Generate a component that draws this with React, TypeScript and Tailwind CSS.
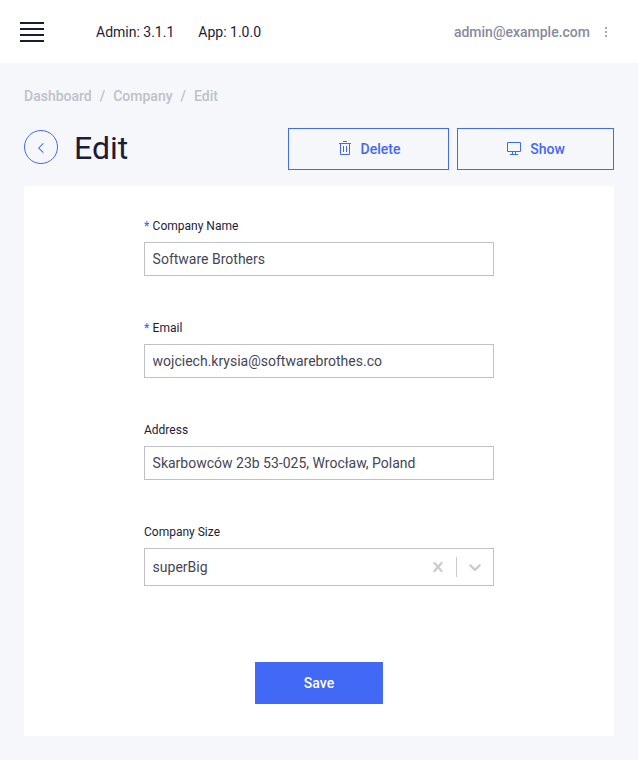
import type { ReactNode } from 'react'

function Field({ label, required, children }: { label: string; required?: boolean; children: ReactNode }) {
  return (
    <div className="mb-11">
      <div className="mb-2 flex h-4 items-center text-xs leading-4">
        {required && <span className="w-[8.600px] font-medium text-[#4268f6]">*</span>}
        <label>{label}</label>
      </div>
      {children}
    </div>
  )
}

function TextInput({ value }: { value: string }) {
  return (
    <input
      readOnly
      value={value}
      className="block h-[34px] w-full border border-[#c0c0ca] bg-white pl-[7.600px] pr-2 text-sm leading-4 text-[#454655] outline-none"
    />
  )
}

function TrashIcon() {
  return (
    <svg width="16" height="16" viewBox="0 0 32 32" fill="currentColor">
      <path d="M12 12h2v12h-2zM18 12h2v12h-2z" />
      <path d="M4 6v2h2v20a2 2 0 0 0 2 2h16a2 2 0 0 0 2-2V8h2V6zm4 22V8h16v20zM12 2h8v2h-8z" />
    </svg>
  )
}

function ScreenIcon() {
  return (
    <svg width="16" height="16" viewBox="0 0 32 32" fill="currentColor">
      <path d="M28 4H4a2 2 0 0 0-2 2v16a2 2 0 0 0 2 2h8v4H8v2h16v-2h-4v-4h8a2 2 0 0 0 2-2V6a2 2 0 0 0-2-2zM18 28h-4v-4h4zm10-6H4V6h24z" />
    </svg>
  )
}

export default function App() {
  return (
    <div className="h-[760px] w-full bg-[#f6f7fb] font-['Roboto',sans-serif] text-sm leading-4 text-[#1c1c38]">
      <header className="flex h-[63px] items-center bg-white pl-5 pr-[28px]">
        <button className="flex w-6 flex-col gap-1" aria-label="Menu">
          <span className="h-0.5 bg-[#1c1c38]" />
          <span className="h-0.5 bg-[#1c1c38]" />
          <span className="h-0.5 bg-[#1c1c38]" />
          <span className="h-0.5 bg-[#1c1c38]" />
        </button>
        <span className="ml-[52px] mt-px">Admin: 3.1.1</span>
        <span className="ml-6 mt-px">App: 1.0.0</span>
        <div className="ml-auto mt-px flex items-center font-medium text-[#898a9a]">
          admin@example.com
          <svg width="8" height="16" viewBox="0 0 8 16" fill="currentColor" className="ml-3">
            <circle cx="4" cy="4" r="1" />
            <circle cx="4" cy="8" r="1" />
            <circle cx="4" cy="12" r="1" />
          </svg>
        </div>
      </header>

      <main className="px-6 pt-[25px]">
        <nav className="flex font-medium text-[#c0c0ca]">
          <span>Dashboard</span>
          <span className="mx-2">/</span>
          <span>Company</span>
          <span className="mx-2">/</span>
          <span>Edit</span>
        </nav>

        <div className="mt-6 flex h-[42px] items-center">
          <button className="-mt-1 flex size-[34px] items-center justify-center rounded-full border border-[#4268f6] text-[#4268f6]" aria-label="Back">
            <svg width="16" height="16" viewBox="0 0 32 32" fill="currentColor" className="mt-0.5">
              <path d="M10 16L20 6l1.400 1.400-8.600 8.600 8.600 8.600L20 26z" />
            </svg>
          </button>
          <h1 className="-mt-0.5 ml-4 text-[32px] leading-10">Edit</h1>
          <div className="ml-auto flex gap-2 font-medium text-[#4268f6]">
            <button className="flex h-[42px] w-[161px] items-center justify-center gap-2 border border-[#4268f6] pb-0.5">
              <TrashIcon />
              <span className="mt-0.5">Delete</span>
            </button>
            <button className="flex h-[42px] w-[157px] items-center justify-center gap-2 border border-[#4268f6] pb-0.5">
              <ScreenIcon />
              <span className="mt-0.5">Show</span>
            </button>
          </div>
        </div>

        <form className="mt-4 h-[550px] bg-white px-[120px] pt-8">
          <Field label="Company Name" required>
            <TextInput value="Software Brothers" />
          </Field>
          <Field label="Email" required>
            <TextInput value="wojciech.krysia@softwarebrothes.co" />
          </Field>
          <Field label="Address">
            <TextInput value="Skarbowców 23b 53-025, Wrocław, Poland" />
          </Field>
          <Field label="Company Size">
            <div className="flex h-[38px] items-center border border-[#c0c0ca] pl-[7.600px] text-[#454655]">
              <span className="flex-1">superBig</span>
              <div className="flex h-full items-center text-[#cccccc]">
                <svg width="20" height="20" viewBox="0 0 20 20" fill="currentColor" className="mx-2">
                  <path d="M14.348 14.849c-0.469 0.469-1.229 0.469-1.697 0l-2.651-3.030-2.651 3.029c-0.469 0.469-1.229 0.469-1.697 0-0.469-0.469-0.469-1.229 0-1.697l2.758-3.150-2.759-3.152c-0.469-0.469-0.469-1.228 0-1.697s1.228-0.469 1.697 0l2.652 3.031 2.651-3.031c0.469-0.469 1.228-0.469 1.697 0s0.469 1.229 0 1.697l-2.758 3.152 2.758 3.150c0.469 0.469 0.469 1.229 0 1.698z" />
                </svg>
                <span className="h-5 w-px bg-[#cccccc]" />
                <svg width="20" height="20" viewBox="0 0 20 20" fill="currentColor" className="mx-2">
                  <path d="M4.516 7.548c0.436-0.446 1.043-0.481 1.576 0l3.908 3.747 3.908-3.747c0.533-0.481 1.141-0.446 1.574 0 0.436 0.445 0.408 1.197 0 1.615-0.406 0.418-4.695 4.502-4.695 4.502-0.217 0.223-0.502 0.335-0.787 0.335s-0.570-0.112-0.789-0.335c0 0-4.287-4.084-4.695-4.502s-0.436-1.170 0-1.615z" />
                </svg>
              </div>
            </div>
          </Field>
          <button type="button" className="mx-auto mt-[76px] block h-[42px] w-32 bg-[#4268f6] font-medium text-white">
            Save
          </button>
        </form>
      </main>
    </div>
  )
}
